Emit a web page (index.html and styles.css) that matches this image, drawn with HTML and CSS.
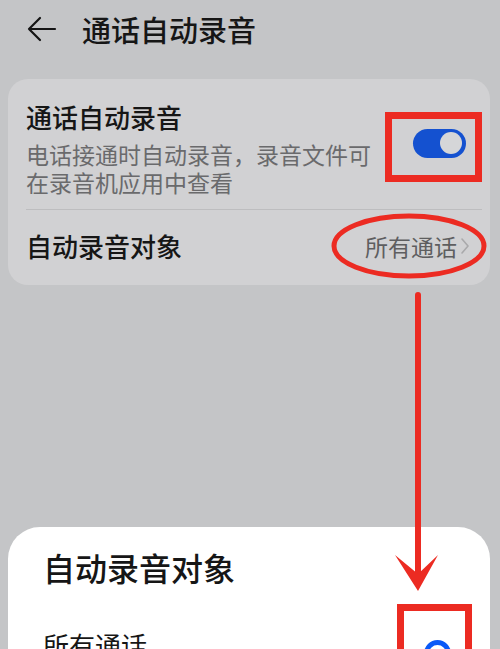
FILE: index.html
```html
<!DOCTYPE html>
<html lang="zh-CN">
<head>
<meta charset="utf-8">
<link rel="stylesheet" href="styles.css">
</head>
<body>
<div class="page">
  <header class="topbar">
    <svg class="back" width="30" height="28" viewBox="0 0 30 28">
      <path d="M28 14 H2 M13 3 L2 14 L13 25" fill="none" stroke="#151515" stroke-width="2.2" stroke-linecap="round" stroke-linejoin="round"/>
    </svg>
    <h1 class="title">通话自动录音</h1>
  </header>

  <section class="card">
    <div class="row row-switch">
      <div class="row-text">
        <div class="row-title">通话自动录音</div>
        <div class="row-sub">电话接通时自动录音，录音文件可在录音机应用中查看</div>
      </div>
      <div class="toggle"><span class="knob"></span></div>
    </div>
    <div class="divider"></div>
    <div class="row row-link">
      <div class="row-title">自动录音对象</div>
      <div class="row-value">所有通话<svg class="chev" width="10" height="18" viewBox="0 0 10 18"><path d="M2 2 L8 9 L2 16" fill="none" stroke="#a9a9ab" stroke-width="1.6" stroke-linecap="round" stroke-linejoin="round"/></svg></div>
    </div>
  </section>

  <section class="sheet">
    <div class="sheet-title">自动录音对象</div>
    <div class="option">
      <span class="option-label">所有通话</span>
      <span class="radio"></span>
    </div>
  </section>

  <svg class="marks" width="500" height="649" viewBox="0 0 500 649">
    <rect x="388.5" y="115.5" width="90" height="63" fill="none" stroke="#ec2b22" stroke-width="7"/>
    <ellipse cx="409" cy="246" rx="75" ry="30" fill="none" stroke="#ec2b22" stroke-width="5"/>
    <line x1="418" y1="295" x2="418" y2="578" stroke="#ec2b22" stroke-width="6" stroke-linecap="round"/>
    <path d="M418 591 L395 555 L418 574 L438 555 Z" fill="#ec2b22"/>
    <rect x="400.5" y="607.5" width="68" height="60" fill="none" stroke="#ec2b22" stroke-width="7"/>
  </svg>
</div>
</body>
</html>
```

FILE: styles.css
```css
html, body {
  margin: 0;
  padding: 0;
}
body {
  background: #c4c5c7;
  font-family: "Noto Sans CJK SC", "Noto Sans", sans-serif;
  color: #161616;
}
.page {
  position: relative;
  width: 500px;
  height: 649px;
  overflow: hidden;
  background: #c4c5c7;
}
.topbar {
  height: 57px;
  display: flex;
  align-items: center;
  padding-left: 27px;
  gap: 25px;
}
.back {
  display: block;
}
.title {
  margin: 0;
  font-size: 29px;
  font-weight: 500;
  line-height: 40px;
}
.card {
  margin: 22px 10px 0 8px;
  background: #d1d1d3;
  border-radius: 20px;
}
.row {
  display: flex;
  align-items: center;
  justify-content: space-between;
}
.row-switch {
  padding: 21px 24px 13px 18px;
}
.row-text {
  width: 352px;
}
.row-title {
  font-size: 26px;
  line-height: 34px;
  font-weight: 500;
}
.row-sub {
  margin-top: 6px;
  font-size: 23px;
  line-height: 28px;
  color: #6a6a6c;
}
.toggle {
  position: relative;
  width: 53px;
  height: 29px;
  border-radius: 15px;
  background: #1451d0;
  margin-top: -10px;
}
.knob {
  position: absolute;
  right: 4px;
  top: 3.5px;
  width: 22px;
  height: 22px;
  border-radius: 50%;
  background: #d5d6d8;
}
.divider {
  height: 1px;
  background: #bdbdbf;
  margin: 0 8px 0 18px;
}
.row-link {
  height: 75px;
  padding: 0 20px 0 18px;
}
.row-link .row-title {
  margin-top: -3px;
}
.row-value {
  display: flex;
  align-items: center;
  gap: 3px;
  font-size: 23px;
  color: #5e5e60;
  margin-top: -3px;
}
.chev {
  display: block;
}
.sheet {
  margin: 242px 10px 0 8px;
  height: 200px;
  background: #ffffff;
  border-radius: 32px 32px 0 0;
  padding: 18px 0 0 35px;
}
.sheet-title {
  font-size: 32px;
  line-height: 44px;
  font-weight: 500;
}
.option {
  margin-top: 33px;
  display: flex;
  align-items: center;
  justify-content: space-between;
  padding-right: 39px;
}
.option-label {
  font-size: 26px;
  line-height: 36px;
}
.radio {
  width: 17px;
  height: 17px;
  border-radius: 50%;
  border: 5px solid #0a59f7;
  margin-top: 18px;
}
.marks {
  position: absolute;
  left: 0;
  top: 0;
  pointer-events: none;
}
```
